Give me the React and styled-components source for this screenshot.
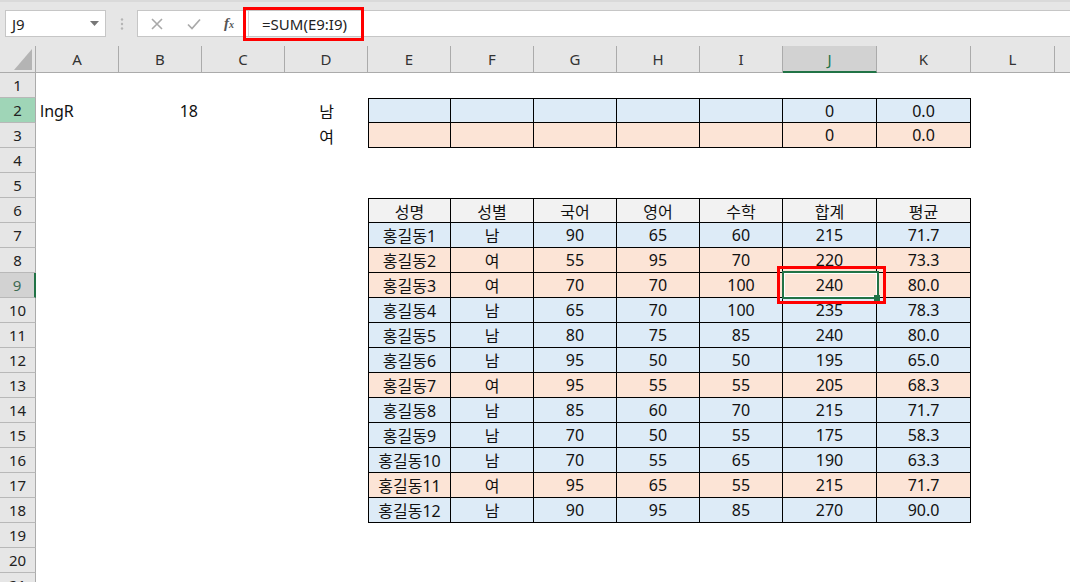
import React from "react";
import styled, { createGlobalStyle } from "styled-components";

const BLUE = '#ddebf7'
const ORANGE = '#fce4d6'
const HEAD = '#f2f2f2'
const GREEN = '#217346'

// last column is only a sliver at the window edge, its letter is off screen
const COLS = ['A', 'B', 'C', 'D', 'E', 'F', 'G', 'H', 'I', 'J', 'K', 'L', '']

const students = [
  ['홍길동1', '남', 90, 65, 60, 215, '71.7'],
  ['홍길동2', '여', 55, 95, 70, 220, '73.3'],
  ['홍길동3', '여', 70, 70, 100, 240, '80.0'],
  ['홍길동4', '남', 65, 70, 100, 235, '78.3'],
  ['홍길동5', '남', 80, 75, 85, 240, '80.0'],
  ['홍길동6', '남', 95, 50, 50, 195, '65.0'],
  ['홍길동7', '여', 95, 55, 55, 205, '68.3'],
  ['홍길동8', '남', 85, 60, 70, 215, '71.7'],
  ['홍길동9', '남', 70, 50, 55, 175, '58.3'],
  ['홍길동10', '남', 70, 55, 65, 190, '63.3'],
  ['홍길동11', '여', 95, 65, 55, 215, '71.7'],
  ['홍길동12', '남', 90, 95, 85, 270, '90.0'],
]

const header = ['성명', '성별', '국어', '영어', '수학', '합계', '평균']

// returns what sits in cell (row, col index 0 = A)
const getCell = (r, c) => {
  const cell = { text: '', align: 'center' }
  if (r === 2 && c === 0) return { text: 'lngR', align: 'left' }
  if (r === 2 && c === 1) return { text: '18', align: 'right' }
  if (r === 2 && c === 3) return { text: '남', align: 'center' }
  if (r === 3 && c === 3) return { text: '여', align: 'center' }

  // summary box E2:K3
  if ((r === 2 || r === 3) && c >= 4 && c <= 10) {
    return {
      text: c === 9 ? '0' : c === 10 ? '0.0' : '',
      align: 'center',
      fill: r === 2 ? BLUE : ORANGE,
      boxed: true,
      leftEdge: c === 4,
      topEdge: r === 2,
    }
  }

  // score table E6:K18
  if (r >= 6 && r <= 18 && c >= 4 && c <= 10) {
    const i = c - 4
    if (r === 6) {
      return { text: header[i], align: 'center', fill: HEAD, boxed: true, leftEdge: c === 4, topEdge: true }
    }
    const s = students[r - 7]
    return {
      text: String(s[i]),
      align: 'center',
      fill: s[1] === '남' ? BLUE : ORANGE,
      boxed: true,
      leftEdge: c === 4,
      selected: r === 9 && c === 9,
    }
  }
  return cell
}

const App = () => {
  const rows = []
  for (let r = 1; r <= 21; r++) rows.push(r)

  return (
    <Page>
      <GlobalStyle />
      <Toolbar>
        <NameBox>
          <span>J9</span>
          <svg width="9" height="5" viewBox="0 0 9 5"><path d="M0 0h9L4.5 5z" fill="#777" /></svg>
        </NameBox>
        <Grip>
          <svg width="4" height="12" viewBox="0 0 4 12">
            <circle cx="2" cy="1.5" r="1.2" fill="#b5b5b5" />
            <circle cx="2" cy="6" r="1.2" fill="#b5b5b5" />
            <circle cx="2" cy="10.5" r="1.2" fill="#b5b5b5" />
          </svg>
        </Grip>
        <FormulaBox>
          <FormulaButtons>
            <svg width="12" height="12" viewBox="0 0 12 12">
              <path d="M1 1l10 10M11 1L1 11" stroke="#a9a9a9" strokeWidth="1.6" fill="none" />
            </svg>
            <svg width="14" height="12" viewBox="0 0 14 12">
              <path d="M1 6.5l4 4L13 1.5" stroke="#a9a9a9" strokeWidth="1.7" fill="none" />
            </svg>
            <Fx>f<sub>x</sub></Fx>
          </FormulaButtons>
          <FormulaInput>=SUM(E9:I9)</FormulaInput>
        </FormulaBox>
        <FormulaCallout />
      </Toolbar>

      <Sheet>
        <Corner>
          <svg width="18" height="21" viewBox="0 0 18 21"><path d="M18 0v21H0z" fill="#b4b4b4" /></svg>
        </Corner>
        {COLS.map((col, c) => (
          <ColHeader key={c} $active={col === 'J'}>{col}</ColHeader>
        ))}

        {rows.map(r => (
          <React.Fragment key={r}>
            <RowHeader $active={r === 9} $picked={r === 2}>{r}</RowHeader>
            {COLS.map((col, c) => {
              const cell = getCell(r, c)
              return (
                <Cell
                  key={c}
                  $align={cell.align}
                  $fill={cell.fill}
                  $boxed={cell.boxed}
                  $leftEdge={cell.leftEdge}
                  $topEdge={cell.topEdge}
                  $selected={cell.selected}
                >
                  {cell.text}
                  {cell.selected && <CellCallout />}
                </Cell>
              )
            })}
          </React.Fragment>
        ))}
      </Sheet>
    </Page>
  );
};

const GlobalStyle = createGlobalStyle`
  body {
    margin: 0;
    background: #fff;
    overflow: hidden;
    font-family: "Noto Sans", "Noto Sans CJK KR", sans-serif;
  }
`;

const Page = styled.div`
  width: 1070px;
  height: 582px;
  overflow: hidden;
  background: #fff;
  display: flex;
  flex-direction: column;
`;

const Toolbar = styled.div`
  position: relative;
  height: 46px;
  flex: none;
  box-sizing: border-box;
  background: #e6e6e6;
  border-top: 2px solid #dadada;
  padding: 8px 0 0 5px;
  display: flex;
  align-items: flex-start;
`;

const NameBox = styled.div`
  width: 101px;
  height: 27px;
  box-sizing: border-box;
  background: #fff;
  border: 1px solid #c6c6c6;
  display: flex;
  align-items: center;
  justify-content: space-between;
  padding: 0 6px 0 6px;
  font-size: 15px;
  color: #222;
`;

const Grip = styled.div`
  width: 31px;
  height: 27px;
  display: flex;
  align-items: center;
  justify-content: center;
`;

const FormulaBox = styled.div`
  flex: 1;
  height: 27px;
  box-sizing: border-box;
  background: #fff;
  border: 1px solid #c6c6c6;
  border-right: none;
  display: flex;
  align-items: center;
`;

const FormulaButtons = styled.div`
  width: 111px;
  height: 100%;
  display: flex;
  align-items: center;
  padding-left: 13px;
  box-sizing: border-box;
  gap: 24px;
  border-right: 1px solid #d4d4d4;
`;

const Fx = styled.span`
  font-family: "Liberation Serif", serif;
  font-style: italic;
  font-weight: bold;
  font-size: 15px;
  color: #555;
  margin-left: -1px;

  sub {
    font-size: 10px;
    vertical-align: 0;
    margin-left: 0px;
  }
`;

const FormulaInput = styled.div`
  padding-left: 13px;
  font-size: 15px;
  color: #222;
`;

const FormulaCallout = styled.div`
  position: absolute;
  left: 243px;
  top: 5px;
  width: 121px;
  height: 34px;
  box-sizing: border-box;
  border: 3px solid #f00;
  pointer-events: none;
`;

const Sheet = styled.div`
  display: grid;
  grid-template-columns: 36px repeat(9, 83px) 94px 94px 84px 83px;
  grid-template-rows: 27px;
  grid-auto-rows: 25px;
  font-family: "Noto Sans", "Noto Sans CJK KR", sans-serif;
`;

const Corner = styled.div`
  background: #e6e6e6;
  border-right: 1px solid #ababab;
  border-bottom: 1px solid #ababab;
  display: flex;
  align-items: flex-end;
  justify-content: flex-end;
  padding: 0 3px 2px 0;
`;

const ColHeader = styled.div`
  background: ${p => p.$active ? '#d2d2d2' : '#e6e6e6'};
  border-right: 1px solid #ababab;
  border-bottom: ${p => p.$active ? `2px solid ${GREEN}` : '1px solid #ababab'};
  display: flex;
  align-items: center;
  justify-content: center;
  font-size: 15px;
  color: ${p => p.$active ? GREEN : '#333'};
  padding-top: ${p => p.$active ? '1px' : '0'};
`;

const RowHeader = styled.div`
  background: ${p => p.$picked ? '#9fd5b7' : p.$active ? '#d2d2d2' : '#e6e6e6'};
  border-right: ${p => p.$active ? `2px solid ${GREEN}` : '1px solid #ababab'};
  border-bottom: 1px solid #b8b8b8;
  display: flex;
  align-items: center;
  justify-content: center;
  font-size: 15px;
  color: ${p => p.$active ? '#3d6b52' : '#222'};
`;

const Cell = styled.div`
  position: relative;
  display: flex;
  align-items: center;
  justify-content: ${p => p.$align === 'left' ? 'flex-start' : p.$align === 'right' ? 'flex-end' : 'center'};
  padding: 0 4px 0 4px;
  background: ${p => p.$fill || '#fff'};
  border-right: ${p => p.$boxed ? '1px solid #000' : 'none'};
  border-bottom: ${p => p.$boxed ? '1px solid #000' : 'none'};
  border-left: ${p => p.$leftEdge ? '1px solid #000' : 'none'};
  border-top: ${p => p.$topEdge ? '1px solid #000' : 'none'};
  font-size: 16px;
  color: #111;
  white-space: nowrap;

  ${p => p.$selected && `
    &::after {
      content: '';
      position: absolute;
      left: -1px;
      top: -2px;
      right: -3px;
      bottom: -2px;
      border: 2px solid ${GREEN};
      box-shadow: inset 0 0 0 1px #fff;
      z-index: 1;
    }
    &::before {
      content: '';
      position: absolute;
      right: -4px;
      bottom: -4px;
      width: 6px;
      height: 6px;
      background: ${GREEN};
      z-index: 2;
    }
  `}
`;

const CellCallout = styled.div`
  position: absolute;
  left: -6px;
  top: -7px;
  right: -10px;
  bottom: -7px;
  border: 3px solid #f00;
  z-index: 3;
  pointer-events: none;
`;

export default App
